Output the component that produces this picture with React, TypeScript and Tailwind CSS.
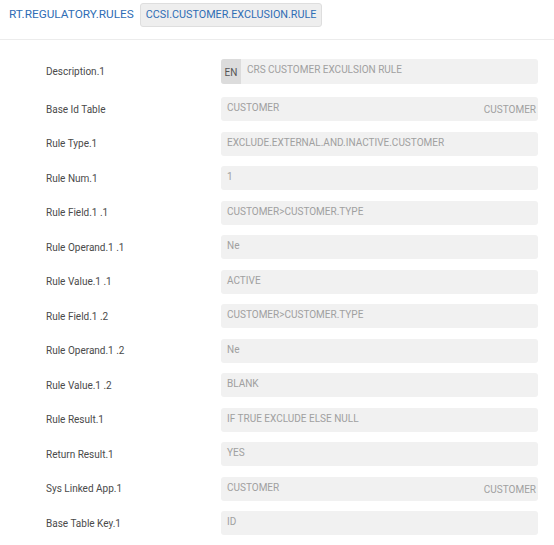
import React from 'react';

type Row = { label: string; value: string; right?: string; lang?: boolean };

const rows: Row[] = [
  { label: 'Description.1', value: 'CRS CUSTOMER EXCULSION RULE', lang: true },
  { label: 'Base Id Table', value: 'CUSTOMER', right: 'CUSTOMER' },
  { label: 'Rule Type.1', value: 'EXCLUDE.EXTERNAL.AND.INACTIVE.CUSTOMER' },
  { label: 'Rule Num.1', value: '1' },
  { label: 'Rule Field.1 .1', value: 'CUSTOMER>CUSTOMER.TYPE' },
  { label: 'Rule Operand.1 .1', value: 'Ne' },
  { label: 'Rule Value.1 .1', value: 'ACTIVE' },
  { label: 'Rule Field.1 .2', value: 'CUSTOMER>CUSTOMER.TYPE' },
  { label: 'Rule Operand.1 .2', value: 'Ne' },
  { label: 'Rule Value.1 .2', value: 'BLANK' },
  { label: 'Rule Result.1', value: 'IF TRUE EXCLUDE ELSE NULL' },
  { label: 'Return Result.1', value: 'YES' },
  { label: 'Sys Linked App.1', value: 'CUSTOMER', right: 'CUSTOMER' },
  { label: 'Base Table Key.1', value: 'ID' },
];

const FieldRow: React.FC<{ row: Row }> = ({ row }) => (
  <div className={row.lang ? 'flex items-start h-[38px]' : 'flex items-start h-[34.5px]'}>
    <div className="w-[221px] h-[24px] shrink-0 pl-[46px] flex items-center text-[10px] text-[#4a4a4a]">
      {row.label}
    </div>
    <div
      className={
        row.lang
          ? 'w-[317px] h-[25px] rounded-[3px] bg-[#f1f1f1] flex items-stretch overflow-hidden'
          : 'w-[317px] h-[24px] rounded-[3px] bg-[#f1f1f1] flex items-stretch overflow-hidden'
      }
    >
      {row.lang && (
        <div className="w-[20px] bg-[#dcdcdc] text-[10px] text-[#555] flex items-center justify-center pt-[2px]">EN</div>
      )}
      <div className="flex-1 pl-[6px] pt-[5px] text-[10px] text-[#a0a0a0] leading-[12px]">{row.value}</div>
      {row.right && (
        <div className="pr-[2px] pt-[7px] text-[10px] text-[#a0a0a0] leading-[12px]">{row.right}</div>
      )}
    </div>
  </div>
);

export default function App() {
  return (
    <div className="w-[554px] h-[545px] bg-white overflow-hidden" style={{ fontFamily: 'Roboto, "Liberation Sans", sans-serif' }}>
      <div className="flex items-center h-[29px] pl-[9px] pt-[1px]">
        <span className="text-[11.8px] text-[#2f6db5]">RT.REGULATORY.RULES</span>
        <span className="ml-[6px] h-[24px] px-[5px] flex items-center rounded-[3px] bg-[#eeeeee] border border-[#dedede] text-[10.8px] text-[#2f6db5]">
          CCSI.CUSTOMER.EXCLUSION.RULE
        </span>
      </div>
      <div className="mt-[10px] border-t border-[#ececec]" />
      <div className="pt-[19px]">
        {rows.map((r) => (
          <FieldRow key={r.label} row={r} />
        ))}
      </div>
    </div>
  );
}
